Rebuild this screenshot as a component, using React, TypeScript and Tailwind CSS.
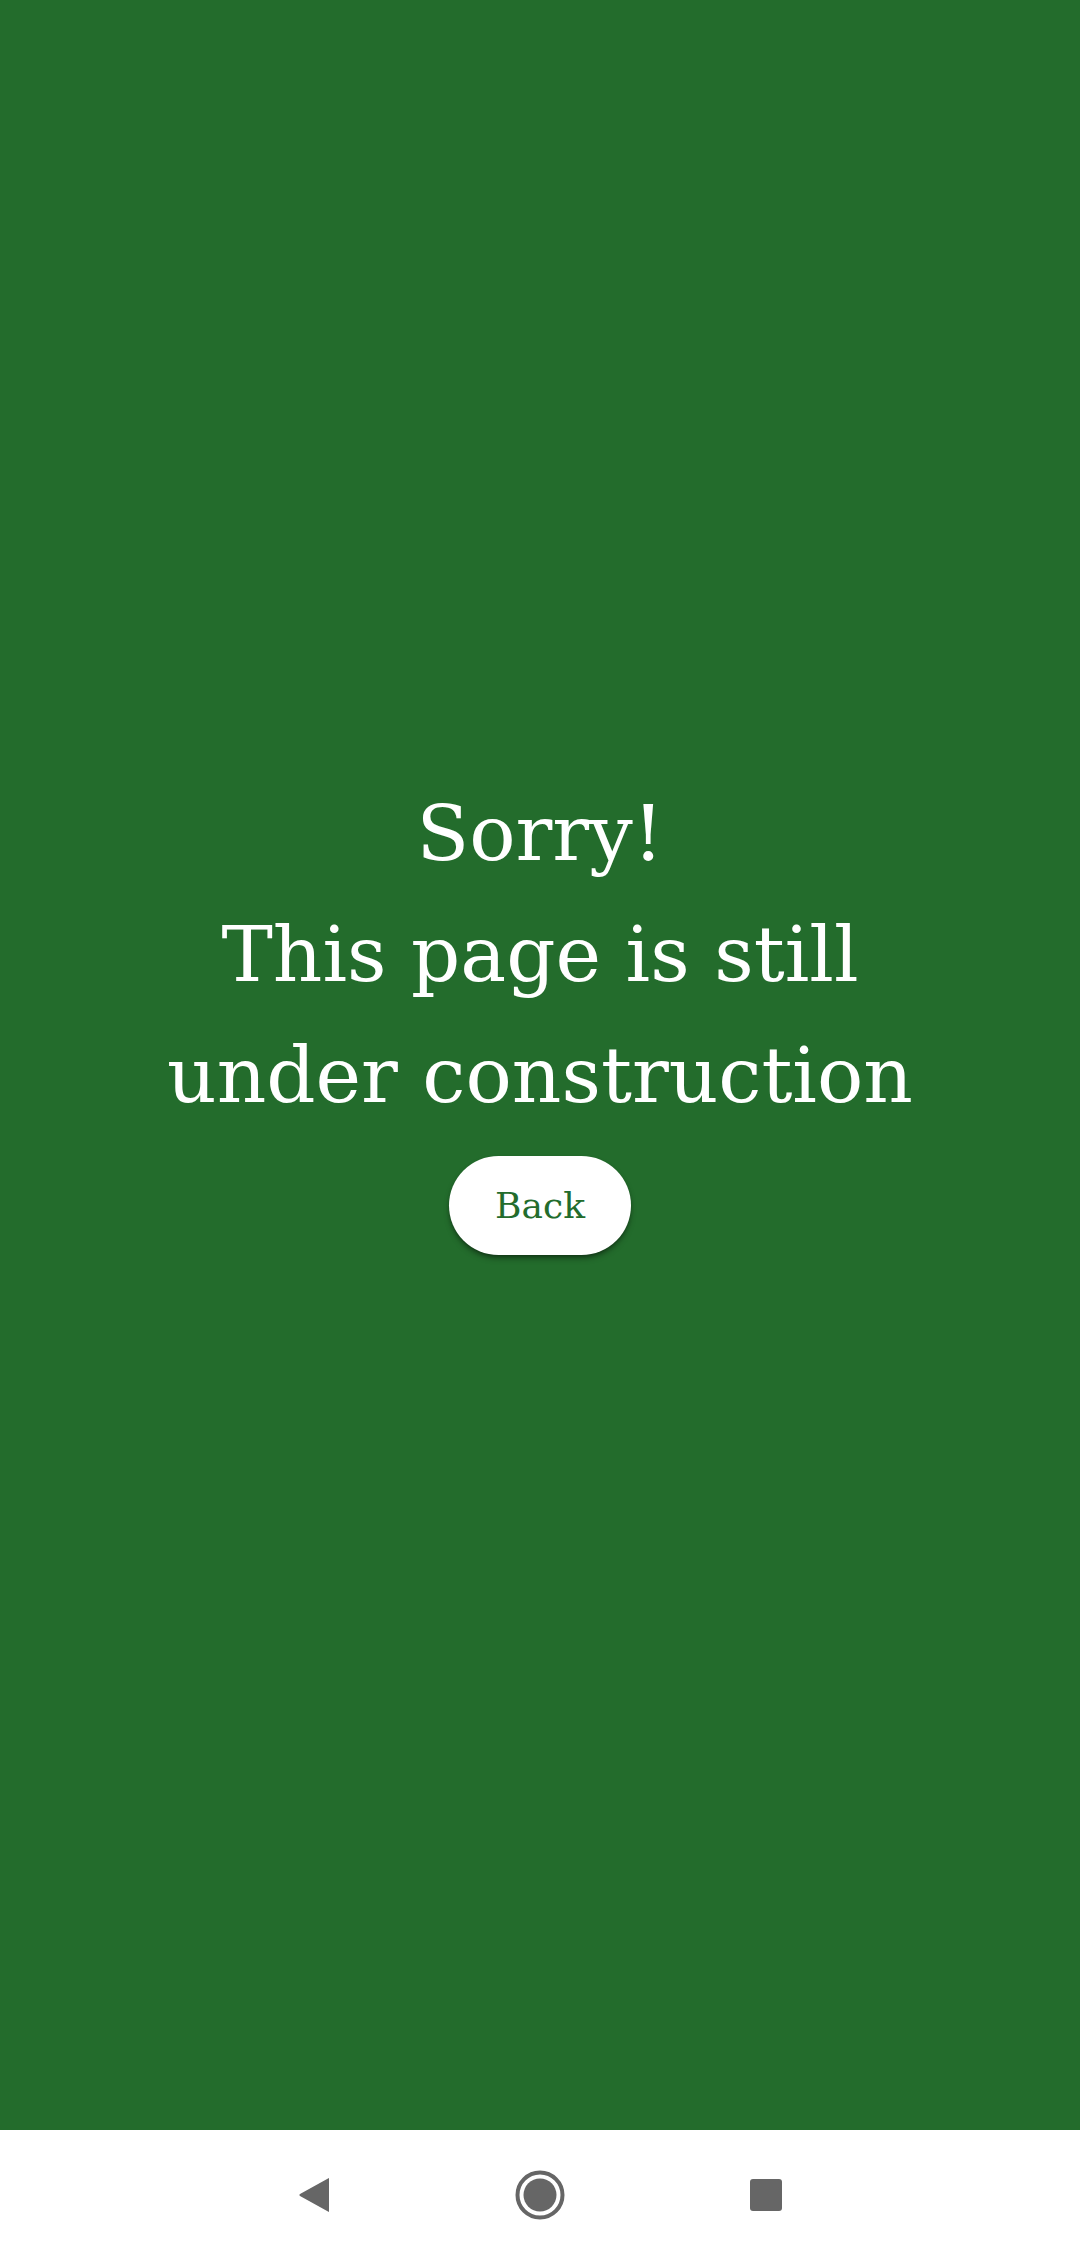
import React from "react";

export default function App() {
  return (
    <div className="w-[1080px] h-[2260px] flex flex-col bg-white" style={{ fontFamily: '"DejaVu Serif", "Liberation Serif", serif' }}>
      <div className="h-[2130px] bg-[#236c2c] flex flex-col items-center justify-center pb-[102px]">
        <h1 className="text-white text-[77px] leading-[121px] text-center font-normal">
          Sorry!
          <br />
          This page is still
          <br />
          under construction
        </h1>
        <button className="mt-[20px] w-[182px] h-[99px] rounded-full bg-white text-[#236c2c] text-[36px] shadow-md shadow-black/40">
          Back
        </button>
      </div>
      <div className="h-[130px] bg-white flex items-center justify-center">
        <div className="w-[226px] flex justify-center">
          <svg width="34" height="38" viewBox="0 0 34 38">
            <path d="M31 2.5 Q32 1.5 32 3 L32 35 Q32 36.5 31 35.5 L3 20 Q1.5 19 3 18 Z" fill="#666666" />
          </svg>
        </div>
        <div className="w-[226px] flex justify-center">
          <svg width="50" height="50" viewBox="0 0 50 50">
            <circle cx="25" cy="25" r="22.5" fill="none" stroke="#666666" strokeWidth="4" />
            <circle cx="25" cy="25" r="16.5" fill="#666666" />
          </svg>
        </div>
        <div className="w-[226px] flex justify-center">
          <div className="w-[32px] h-[32px] rounded-[3px] bg-[#666666]" />
        </div>
      </div>
    </div>
  );
}
